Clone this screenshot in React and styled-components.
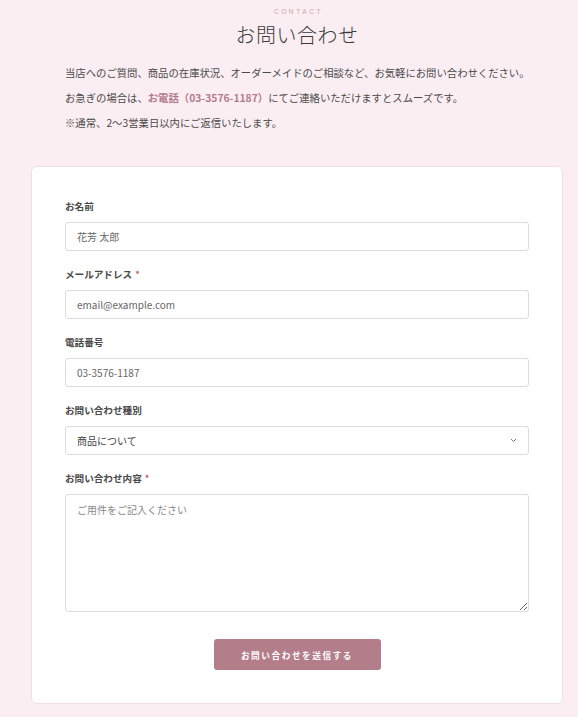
import React from "react";
import styled, { createGlobalStyle } from "styled-components";

const Global = createGlobalStyle`
  html, body { margin: 0; padding: 0; background: #fbeef2; }
  body { font-family: "Noto Sans CJK JP", "Noto Sans", sans-serif; color: #444; }
  * { box-sizing: border-box; }
`;

const Page = styled.div`
  margin: 0 15px 0 31px;
  padding-top: 7px;
  padding-bottom: 15px;
`;

const Eyebrow = styled.div`
  text-align: center;
  font-family: "Liberation Sans", "Noto Sans", sans-serif;
  font-size: 6.5px;
  line-height: 10px;
  letter-spacing: 2.6px;
  color: #c8a3ae;
  padding-left: 3px;
`;

const Title = styled.h1`
  margin: 5px 0 0;
  text-align: center;
  font-family: "Liberation Serif", "Noto Sans CJK JP", serif;
  font-weight: 300;
  font-size: 20px;
  line-height: 28px;
  color: #3a3a3a;
  letter-spacing: 0.5px;
`;

const Intro = styled.div`
  margin-top: 10px;
  padding: 0 34px;
  font-size: 10.35px;
  line-height: 25px;
  color: #4a4a4a;
`;

const Line = styled.p`
  margin: 0;
  white-space: nowrap;
`;

const Phone = styled.strong`
  color: #b27b8a;
  font-weight: 700;
`;

const Card = styled.form`
  margin-top: 31px;
  background: #fff;
  border: 1px solid #efdfe4;
  border-radius: 6px;
  padding: 31px 33px 33px;
  display: flex;
  flex-direction: column;
`;

const Field = styled.div`
  display: flex;
  flex-direction: column;
  margin-bottom: 15px;
`;

const Label = styled.label`
  display: flex;
  align-items: center;
  height: 16px;
  font-size: 9.6px;
  font-weight: 700;
  color: #4a4a4a;
  margin-bottom: 8px;
`;

const Req = styled.span`
  color: #c45a6e;
  margin-left: 3px;
  font-size: 9px;
`;

const inputBase = `
  display: block;
  width: 100%;
  border: 1px solid #dcdcdc;
  border-radius: 3px;
  background: #fff;
  font-family: "Noto Sans CJK JP", "Liberation Sans", sans-serif;
  font-size: 10px;
  color: #555;
  padding: 0 11px;
  outline: none;
  margin: 0;
`;

const Input = styled.input`
  ${inputBase}
  height: 29px;
  &::placeholder { color: #666; }
`;

const SelectWrap = styled.div`
  position: relative;
`;

const Select = styled.select`
  ${inputBase}
  height: 29px;
  appearance: none;
  color: #444;
`;

const Chevron = styled.svg`
  position: absolute;
  right: 12px;
  top: 12px;
  pointer-events: none;
`;

const TextArea = styled.textarea`
  ${inputBase}
  height: 118px;
  padding: 7px 11px;
  line-height: 16px;
  resize: vertical;
  &::placeholder { color: #888; }
`;

const Actions = styled.div`
  display: flex;
  justify-content: center;
  margin-top: 12px;
`;

const Button = styled.button`
  width: 167px;
  height: 31px;
  border: none;
  border-radius: 3px;
  background: #b47d8a;
  color: #fff;
  font-family: "Liberation Serif", "Noto Sans CJK JP", serif;
  font-size: 8.6px;
  letter-spacing: 1.6px;
  font-weight: 700;
  cursor: pointer;
`;

export default function App() {
  return (
    <>
      <Global />
      <Page>
        <Eyebrow>CONTACT</Eyebrow>
        <Title>お問い合わせ</Title>
        <Intro>
          <Line>当店へのご質問、商品の在庫状況、オーダーメイドのご相談など、お気軽にお問い合わせください。</Line>
          <Line>
            お急ぎの場合は、<Phone>お電話（03-3576-1187）</Phone>にてご連絡いただけますとスムーズです。
          </Line>
          <Line>※通常、2〜3営業日以内にご返信いたします。</Line>
        </Intro>
        <Card onSubmit={(e) => e.preventDefault()}>
          <Field>
            <Label>お名前</Label>
            <Input placeholder="花芳 太郎" />
          </Field>
          <Field>
            <Label>
              メールアドレス<Req>*</Req>
            </Label>
            <Input placeholder="email@example.com" />
          </Field>
          <Field>
            <Label>電話番号</Label>
            <Input placeholder="03-3576-1187" />
          </Field>
          <Field>
            <Label>お問い合わせ種別</Label>
            <SelectWrap>
              <Select defaultValue="product">
                <option value="product">商品について</option>
                <option value="order">オーダーメイドについて</option>
                <option value="other">その他</option>
              </Select>
              <Chevron width="7" height="5" viewBox="0 0 7 5">
                <path d="M1 1l2.5 2.5L6 1" fill="none" stroke="#777" strokeWidth="1" />
              </Chevron>
            </SelectWrap>
          </Field>
          <Field>
            <Label>
              お問い合わせ内容<Req>*</Req>
            </Label>
            <TextArea placeholder="ご用件をご記入ください" />
          </Field>
          <Actions>
            <Button type="submit">お問い合わせを送信する</Button>
          </Actions>
        </Card>
      </Page>
    </>
  );
}
